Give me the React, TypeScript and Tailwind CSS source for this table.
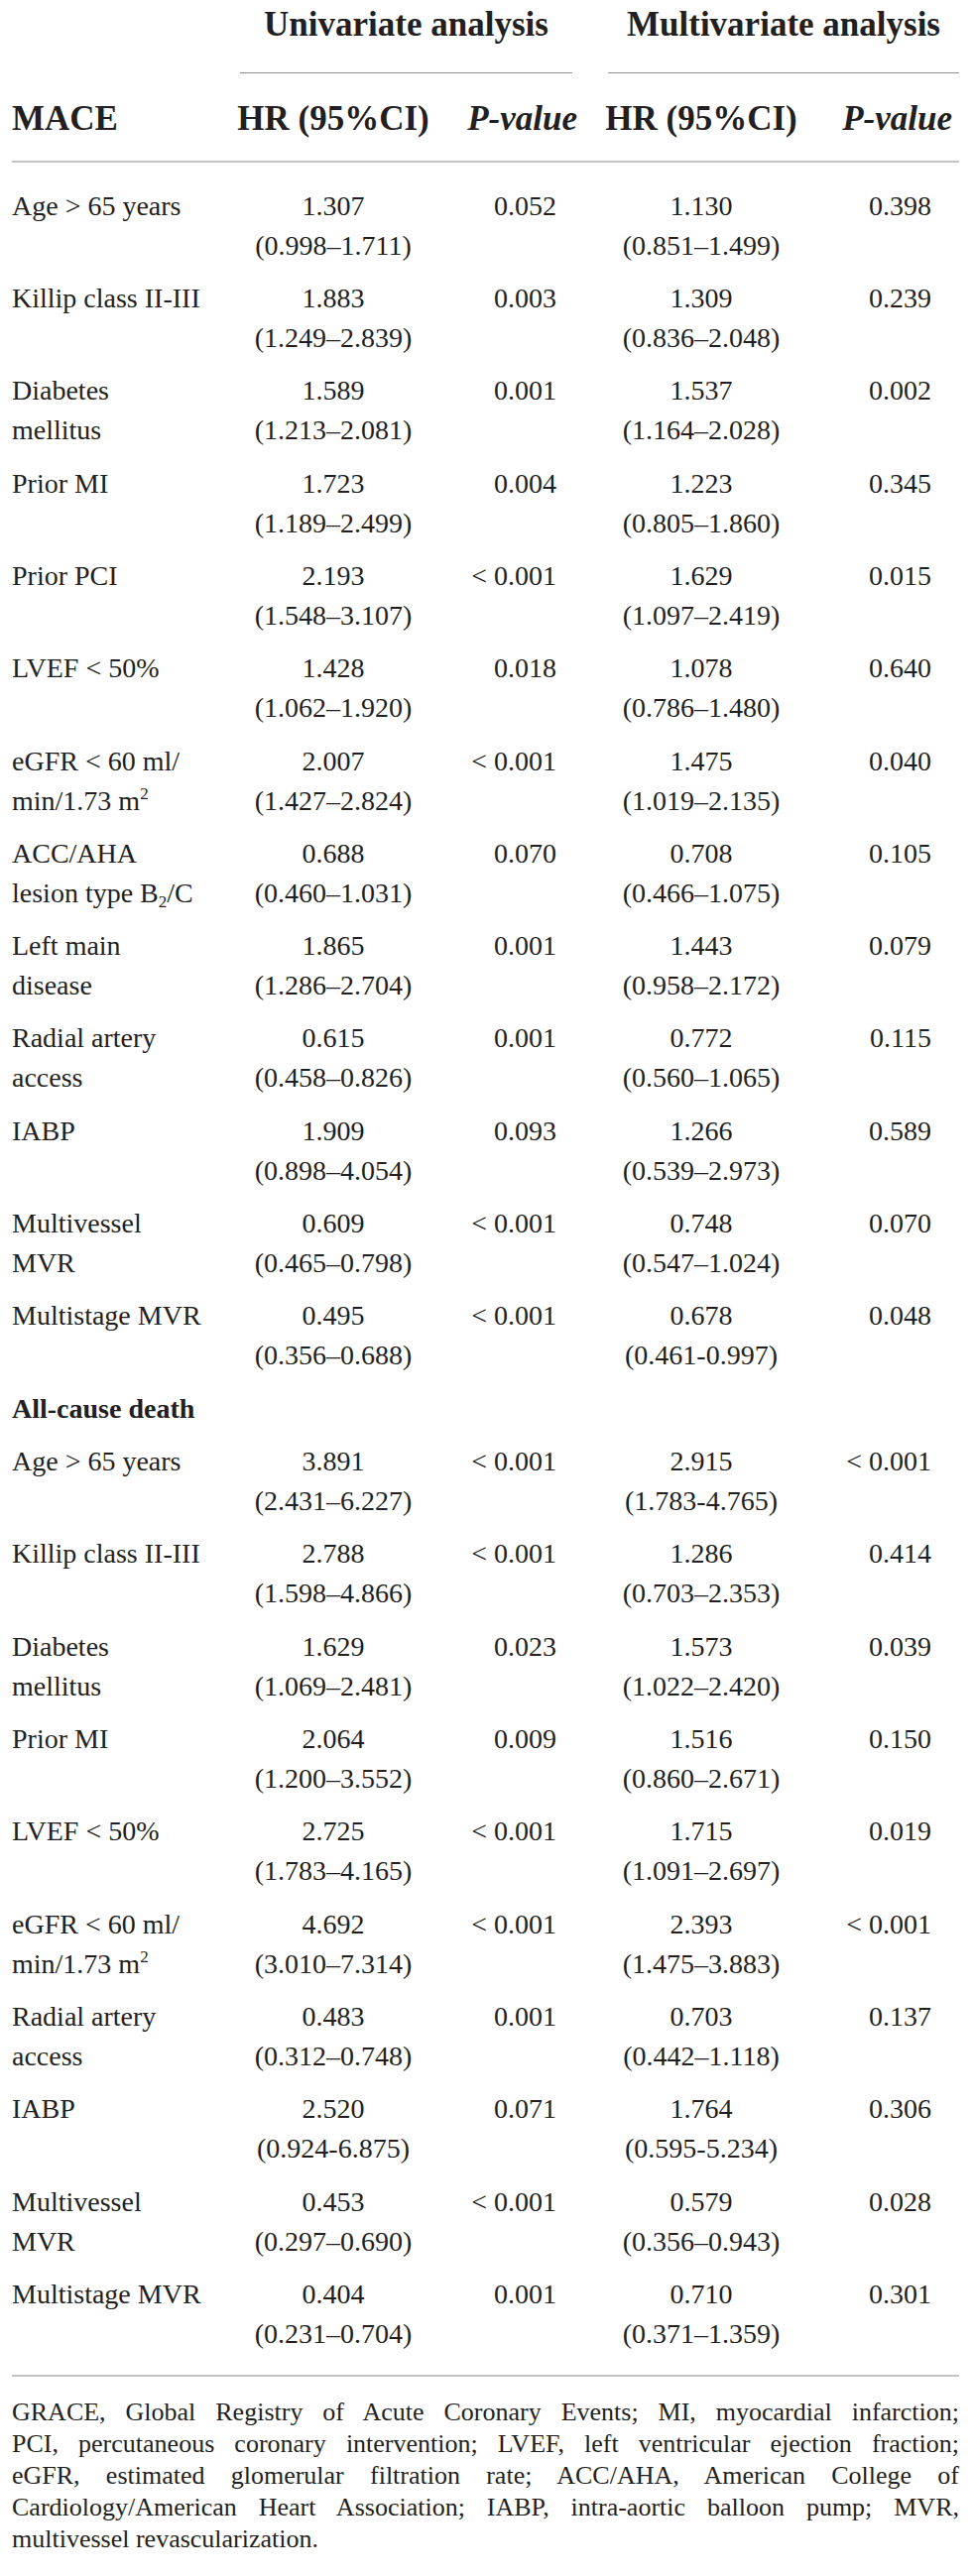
import React from "react";

type R = {
  label: React.ReactNode[];
  hr1: string;
  ci1: string;
  p1: string;
  hr2: string;
  ci2: string;
  p2: string;
};

const Sup = () => <sup className="text-[17px] relative top-[-11px] align-baseline">2</sup>;
const Sub = () => <sub className="text-[17px] relative top-[5px] align-baseline">2</sub>;

const mace: R[] = [
  { label: ["Age > 65 years"], hr1: "1.307", ci1: "(0.998–1.711)", p1: "0.052", hr2: "1.130", ci2: "(0.851–1.499)", p2: "0.398" },
  { label: ["Killip class II-III"], hr1: "1.883", ci1: "(1.249–2.839)", p1: "0.003", hr2: "1.309", ci2: "(0.836–2.048)", p2: "0.239" },
  { label: ["Diabetes", "mellitus"], hr1: "1.589", ci1: "(1.213–2.081)", p1: "0.001", hr2: "1.537", ci2: "(1.164–2.028)", p2: "0.002" },
  { label: ["Prior MI"], hr1: "1.723", ci1: "(1.189–2.499)", p1: "0.004", hr2: "1.223", ci2: "(0.805–1.860)", p2: "0.345" },
  { label: ["Prior PCI"], hr1: "2.193", ci1: "(1.548–3.107)", p1: "< 0.001", hr2: "1.629", ci2: "(1.097–2.419)", p2: "0.015" },
  { label: ["LVEF < 50%"], hr1: "1.428", ci1: "(1.062–1.920)", p1: "0.018", hr2: "1.078", ci2: "(0.786–1.480)", p2: "0.640" },
  {
    label: ["eGFR < 60 ml/", <>min/1.73 m<Sup /></>],
    hr1: "2.007", ci1: "(1.427–2.824)", p1: "< 0.001", hr2: "1.475", ci2: "(1.019–2.135)", p2: "0.040",
  },
  {
    label: ["ACC/AHA", <>lesion type B<Sub />/C</>],
    hr1: "0.688", ci1: "(0.460–1.031)", p1: "0.070", hr2: "0.708", ci2: "(0.466–1.075)", p2: "0.105",
  },
  { label: ["Left main", "disease"], hr1: "1.865", ci1: "(1.286–2.704)", p1: "0.001", hr2: "1.443", ci2: "(0.958–2.172)", p2: "0.079" },
  { label: ["Radial artery", "access"], hr1: "0.615", ci1: "(0.458–0.826)", p1: "0.001", hr2: "0.772", ci2: "(0.560–1.065)", p2: "0.115" },
  { label: ["IABP"], hr1: "1.909", ci1: "(0.898–4.054)", p1: "0.093", hr2: "1.266", ci2: "(0.539–2.973)", p2: "0.589" },
  { label: ["Multivessel", "MVR"], hr1: "0.609", ci1: "(0.465–0.798)", p1: "< 0.001", hr2: "0.748", ci2: "(0.547–1.024)", p2: "0.070" },
  { label: ["Multistage MVR"], hr1: "0.495", ci1: "(0.356–0.688)", p1: "< 0.001", hr2: "0.678", ci2: "(0.461-0.997)", p2: "0.048" },
];

const death: R[] = [
  { label: ["Age > 65 years"], hr1: "3.891", ci1: "(2.431–6.227)", p1: "< 0.001", hr2: "2.915", ci2: "(1.783-4.765)", p2: "< 0.001" },
  { label: ["Killip class II-III"], hr1: "2.788", ci1: "(1.598–4.866)", p1: "< 0.001", hr2: "1.286", ci2: "(0.703–2.353)", p2: "0.414" },
  { label: ["Diabetes", "mellitus"], hr1: "1.629", ci1: "(1.069–2.481)", p1: "0.023", hr2: "1.573", ci2: "(1.022–2.420)", p2: "0.039" },
  { label: ["Prior MI"], hr1: "2.064", ci1: "(1.200–3.552)", p1: "0.009", hr2: "1.516", ci2: "(0.860–2.671)", p2: "0.150" },
  { label: ["LVEF < 50%"], hr1: "2.725", ci1: "(1.783–4.165)", p1: "< 0.001", hr2: "1.715", ci2: "(1.091–2.697)", p2: "0.019" },
  {
    label: ["eGFR < 60 ml/", <>min/1.73 m<Sup /></>],
    hr1: "4.692", ci1: "(3.010–7.314)", p1: "< 0.001", hr2: "2.393", ci2: "(1.475–3.883)", p2: "< 0.001",
  },
  { label: ["Radial artery", "access"], hr1: "0.483", ci1: "(0.312–0.748)", p1: "0.001", hr2: "0.703", ci2: "(0.442–1.118)", p2: "0.137" },
  { label: ["IABP"], hr1: "2.520", ci1: "(0.924-6.875)", p1: "0.071", hr2: "1.764", ci2: "(0.595-5.234)", p2: "0.306" },
  { label: ["Multivessel", "MVR"], hr1: "0.453", ci1: "(0.297–0.690)", p1: "< 0.001", hr2: "0.579", ci2: "(0.356–0.943)", p2: "0.028" },
  { label: ["Multistage MVR"], hr1: "0.404", ci1: "(0.231–0.704)", p1: "0.001", hr2: "0.710", ci2: "(0.371–1.359)", p2: "0.301" },
];

function Row({ r }: { r: R }) {
  return (
    <div className="flex py-[6.667px] leading-[40px]">
      <div className="w-[230px] whitespace-nowrap">
        {r.label.map((l, i) => (
          <div key={i}>{l}</div>
        ))}
      </div>
      <div className="w-[188px] flex flex-col items-center whitespace-nowrap">
        <div>{r.hr1}</div>
        <div>{r.ci1}</div>
      </div>
      <div className="w-[152px] text-right pr-[21px] whitespace-nowrap">{r.p1}</div>
      <div className="w-[250px] flex flex-col items-center whitespace-nowrap">
        <div>{r.hr2}</div>
        <div>{r.ci2}</div>
      </div>
      <div className="w-[128px] text-right pr-[21px] whitespace-nowrap">{r.p2}</div>
    </div>
  );
}

const foot = [
  "GRACE, Global Registry of Acute Coronary Events; MI, myocardial infarction;",
  "PCI, percutaneous coronary intervention; LVEF, left ventricular ejection fraction;",
  "eGFR, estimated glomerular filtration rate; ACC/AHA, American College of",
  "Cardiology/American Heart Association; IABP, intra-aortic balloon pump; MVR,",
];

export default function App() {
  return (
    <div className="w-[982px] bg-white pl-[12px] pr-[15px] text-[#231f20] [font-family:'Liberation_Serif',serif]">
      {/* header row 1 */}
      <div className="flex pt-[4px] text-[35px] font-bold leading-[42px]">
        <div className="w-[230px]" />
        <div className="w-[335px] flex justify-center whitespace-nowrap border-b border-[#8f8f8f] pb-[27px]">
          Univariate analysis
        </div>
        <div className="w-[36px]" />
        <div className="w-[354px] flex justify-center whitespace-nowrap border-b border-[#8f8f8f] pb-[27px]">
          Multivariate analysis
        </div>
      </div>
      {/* header row 2 */}
      <div className="flex pt-[25px] pb-[21px] text-[35px] font-bold leading-[42px] border-b-2 border-[#c4c4c4]">
        <div className="w-[230px] whitespace-nowrap">MACE</div>
        <div className="w-[188px] flex justify-center whitespace-nowrap">HR (95%CI)</div>
        <div className="w-[152px] flex justify-end whitespace-nowrap italic">P-value</div>
        <div className="w-[250px] flex justify-center whitespace-nowrap">HR (95%CI)</div>
        <div className="w-[128px] flex justify-end whitespace-nowrap italic">P-value</div>
      </div>
      {/* body */}
      <div className="pt-[17px] pb-[14px] text-[28px] border-b-2 border-[#c4c4c4]">
        {mace.map((r, i) => (
          <Row key={"m" + i} r={r} />
        ))}
        <div className="py-[6.667px] leading-[40px] font-bold">All-cause death</div>
        {death.map((r, i) => (
          <Row key={"d" + i} r={r} />
        ))}
      </div>
      {/* footnote */}
      <div className="pt-[20px] pb-[21px] text-[26px] leading-[32px]">
        {foot.map((l, i) => (
          <div key={i} className="text-justify [text-align-last:justify] whitespace-nowrap">
            {l}
          </div>
        ))}
        <div>multivessel revascularization.</div>
      </div>
    </div>
  );
}
